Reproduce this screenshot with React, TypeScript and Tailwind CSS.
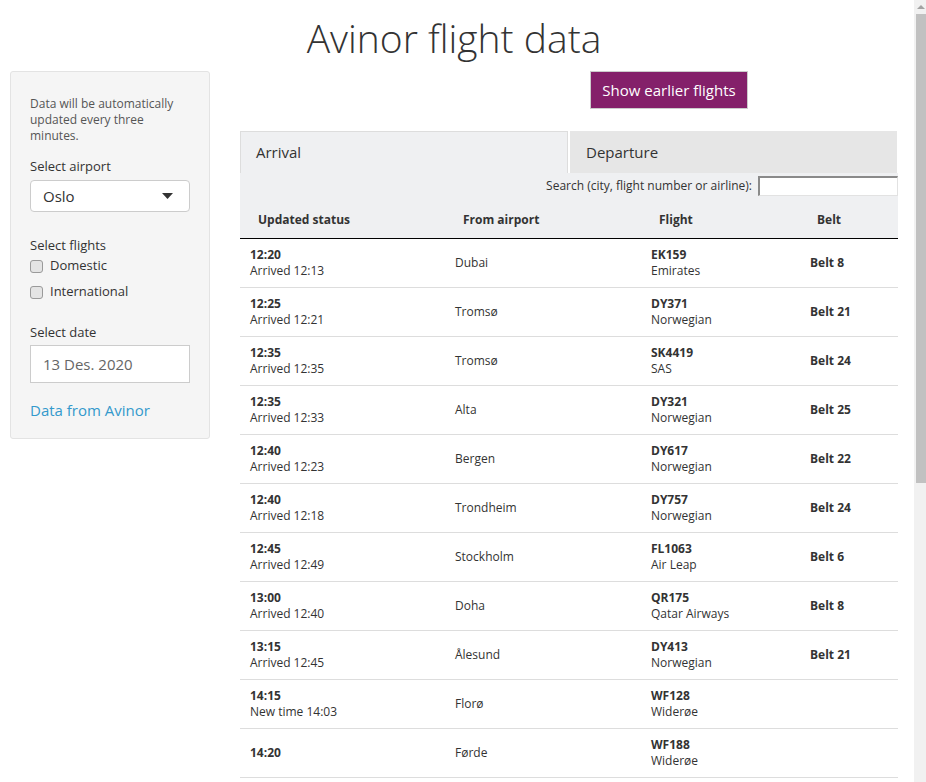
import React from 'react'

const font = { fontFamily: '"Open Sans", "Noto Sans", Arial, sans-serif' }

type Flight = { time: string; status: string; from: string; code: string; airline: string; belt: string }

const flights: Flight[] = [
  { time: '12:20', status: 'Arrived 12:13', from: 'Dubai', code: 'EK159', airline: 'Emirates', belt: 'Belt 8' },
  { time: '12:25', status: 'Arrived 12:21', from: 'Tromsø', code: 'DY371', airline: 'Norwegian', belt: 'Belt 21' },
  { time: '12:35', status: 'Arrived 12:35', from: 'Tromsø', code: 'SK4419', airline: 'SAS', belt: 'Belt 24' },
  { time: '12:35', status: 'Arrived 12:33', from: 'Alta', code: 'DY321', airline: 'Norwegian', belt: 'Belt 25' },
  { time: '12:40', status: 'Arrived 12:23', from: 'Bergen', code: 'DY617', airline: 'Norwegian', belt: 'Belt 22' },
  { time: '12:40', status: 'Arrived 12:18', from: 'Trondheim', code: 'DY757', airline: 'Norwegian', belt: 'Belt 24' },
  { time: '12:45', status: 'Arrived 12:49', from: 'Stockholm', code: 'FL1063', airline: 'Air Leap', belt: 'Belt 6' },
  { time: '13:00', status: 'Arrived 12:40', from: 'Doha', code: 'QR175', airline: 'Qatar Airways', belt: 'Belt 8' },
  { time: '13:15', status: 'Arrived 12:45', from: 'Ålesund', code: 'DY413', airline: 'Norwegian', belt: 'Belt 21' },
  { time: '14:15', status: 'New time 14:03', from: 'Florø', code: 'WF128', airline: 'Widerøe', belt: '' },
  { time: '14:20', status: '', from: 'Førde', code: 'WF188', airline: 'Widerøe', belt: '' },
]

function Checkbox({ label }: { label: string }) {
  return (
    <div className="flex items-center h-[18px] text-[13px] text-[#333]">
      <span className="w-[13px] h-[13px] rounded-[3px] border border-[#9a9a9a] bg-[#e4e4e4] mr-[7px]" />
      {label}
    </div>
  )
}

function Sidebar() {
  return (
    <div className="w-[200px] ml-[10px] self-start bg-[#f5f5f5] border border-[#e3e3e3] rounded-[3px] px-[19px] pt-[24px] pb-[17px]">
      <p className="text-[12px] leading-[16px] text-[#555]">Data will be automatically updated every three minutes.</p>
      <div className="mt-[13px] text-[13px] leading-[18px] text-[#333]">Select airport</div>
      <div className="mt-[5px] h-[32px] bg-white border border-[#ccc] rounded-[4px] flex items-center justify-between pl-[12px] pr-[16px] text-[15px] text-[#333]">
        <span>Oslo</span>
        <svg width="11" height="6" viewBox="0 0 11 6"><path d="M0 0h11L5.5 6z" fill="#333" /></svg>
      </div>
      <div className="mt-[24px] text-[13px] leading-[18px] text-[#333]">Select flights</div>
      <div className="mt-[3px]"><Checkbox label="Domestic" /></div>
      <div className="mt-[8px]"><Checkbox label="International" /></div>
      <div className="mt-[22px] text-[13px] leading-[18px] text-[#333]">Select date</div>
      <div className="mt-[4px] h-[38px] bg-white border border-[#ccc] flex items-center pl-[12px] text-[15px] text-[#666]">13 Des. 2020</div>
      <div className="mt-[16px] text-[15px] leading-[22px] text-[#3399cc]">Data from Avinor</div>
    </div>
  )
}

function FlightTable() {
  const cols = 'grid grid-cols-[205px_196px_159px_98px] items-center'
  return (
    <div className="w-[658px]">
      <div className="flex gap-[2px] w-[657px]">
        <div className="flex-1 h-[42px] flex items-center pl-[15px] bg-[#eff0f2] border border-b-0 border-[#ddd] text-[15px] text-[#333]">Arrival</div>
        <div className="flex-1 h-[42px] flex items-center pl-[16px] bg-[#e6e6e6] text-[15px] text-[#333]">Departure</div>
      </div>
      <div className="bg-[#eff0f2] pt-[3px]">
        <div className="flex items-center justify-end h-[20px] text-[12px] text-[#333]">
          <span className="mr-[6px]">Search (city, flight number or airline):</span>
          <span className="w-[140px] h-[20px] bg-white border border-t-2 border-l-2 border-t-[#8a8a8a] border-l-[#8a8a8a] border-r-[#e2e2e2] border-b-[#e2e2e2]" />
        </div>
        <div className={`${cols} mt-[6px] py-[10px] border-b border-black text-[12px] leading-[16px] font-bold text-[#333]`}>
          <div className="pl-[18px]">Updated status</div>
          <div className="pl-[18px]">From airport</div>
          <div className="pl-[18px]">Flight</div>
          <div className="pl-[17px]">Belt</div>
        </div>
      </div>
      {flights.map((f, i) => (
        <div key={i} className={`${cols} py-[8px] border-b border-[#ddd] text-[12px] leading-[16px] text-[#333]`}>
          <div className="pl-[10px]">
            <div className="font-bold">{f.time}</div>
            {f.status && <div>{f.status}</div>}
          </div>
          <div className="pl-[10px]">{f.from}</div>
          <div className="pl-[10px]">
            <div className="font-bold">{f.code}</div>
            <div>{f.airline}</div>
          </div>
          <div className="pl-[10px] font-bold">{f.belt}</div>
        </div>
      ))}
    </div>
  )
}

// Page scrollbar as seen in the screenshot (arrow, thumb, track)
function Scrollbar() {
  return (
    <div className="w-[12px] shrink-0 bg-[#f1f1f1] flex flex-col">
      <div className="h-[14px] flex items-center justify-center pl-[2px]">
        <svg width="8" height="4" viewBox="0 0 8 4"><path d="M0 4L4 0l4 4z" fill="#a3a3a3" /></svg>
      </div>
      <div className="h-[469px] ml-[2px] bg-[#c1c1c1]" />
    </div>
  )
}

export default function App() {
  return (
    <div className="h-screen overflow-hidden flex bg-white" style={font}>
      <div className="flex-1 min-w-0">
        <h1 className="w-[908px] pt-[16px] text-center text-[39px] leading-[44px] font-light text-[#333]">Avinor flight data</h1>
        <div className="flex mt-[11px]">
          <Sidebar />
          <div className="ml-[30px]">
            <div className="pl-[350px]">
              <button className="w-[158px] h-[38px] bg-[#84206a] border border-[#ccc] text-white text-[15px]">Show earlier flights</button>
            </div>
            <div className="mt-[22px]">
              <FlightTable />
            </div>
          </div>
        </div>
      </div>
      <Scrollbar />
    </div>
  )
}
